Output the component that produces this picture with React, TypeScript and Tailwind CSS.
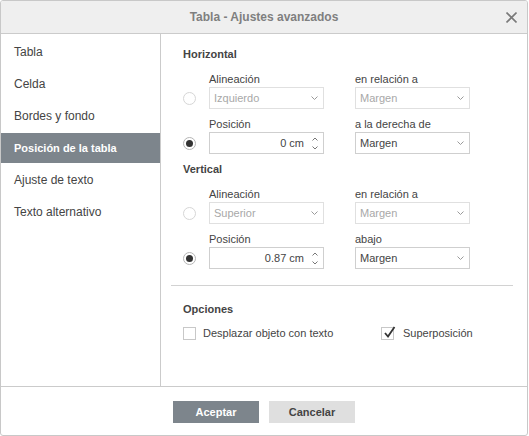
import React from "react";

function Chevron() {
  return (
    <svg width="7" height="4" viewBox="0 0 7 4" className="shrink-0">
      <path d="M0.5 0.5 L3.5 3.5 L6.5 0.5" stroke="#9a9a9a" strokeWidth="1" fill="none" />
    </svg>
  );
}

function Select({ value, disabled }: { value: string; disabled?: boolean }) {
  return (
    <div
      className={`w-[115px] h-[22px] border flex items-center justify-between pl-[4px] pr-[5px] ${
        disabled ? "border-[#e0e0e0] text-[#a8a8a8]" : "border-[#cfcfcf] text-[#444]"
      }`}
    >
      <span>{value}</span>
      <Chevron />
    </div>
  );
}

function Spinner({ value }: { value: string }) {
  return (
    <div className="w-[115px] h-[22px] border border-[#cfcfcf] flex items-center text-[#444]">
      <span className="flex-1 text-right pr-[8px]">{value}</span>
      <div className="flex flex-col justify-between h-full pt-[4px] pb-[3px] pr-[5px]">
        <svg width="6" height="4" viewBox="0 0 6 4">
          <path d="M0.5 3.5 L3 1 L5.5 3.5" stroke="#777" strokeWidth="1" fill="none" />
        </svg>
        <svg width="6" height="4" viewBox="0 0 6 4">
          <path d="M0.5 0.5 L3 3 L5.5 0.5" stroke="#777" strokeWidth="1" fill="none" />
        </svg>
      </div>
    </div>
  );
}

function Radio({ checked }: { checked?: boolean }) {
  return (
    <div
      className={`w-[13px] h-[13px] rounded-full border flex items-center justify-center ${
        checked ? "border-[#b5b5b5]" : "border-[#d6d6d6]"
      }`}
    >
      {checked && <div className="w-[7px] h-[7px] rounded-full bg-[#333]" />}
    </div>
  );
}

function Row({
  leftLabel,
  rightLabel,
  checked,
  left,
  right,
}: {
  leftLabel: string;
  rightLabel: string;
  checked?: boolean;
  left: React.ReactNode;
  right: React.ReactNode;
}) {
  return (
    <div className="flex flex-col">
      <div className="flex h-[16px] leading-[16px]">
        <div className="w-[26px]" />
        <div className="w-[115px]">{leftLabel}</div>
        <div className="w-[115px] ml-[31px]">{rightLabel}</div>
      </div>
      <div className="flex h-[22px] items-center">
        <div className="w-[26px]">
          <Radio checked={checked} />
        </div>
        {left}
        <div className="ml-[31px]">{right}</div>
      </div>
    </div>
  );
}

function Checkbox({ checked }: { checked?: boolean }) {
  return (
    <div className="relative w-[13px] h-[13px] border border-[#c8c8c8] shrink-0">
      {checked && (
        <svg
          width="14"
          height="14"
          viewBox="0 0 14 14"
          className="absolute left-[1px] top-[-3px]"
        >
          <path d="M2 8 L5 11.5 L11.5 2" stroke="#333" strokeWidth="1.8" fill="none" />
        </svg>
      )}
    </div>
  );
}

const navItems = [
  "Tabla",
  "Celda",
  "Bordes y fondo",
  "Posición de la tabla",
  "Ajuste de texto",
  "Texto alternativo",
];

export default function App() {
  return (
    <div className="w-[528px] h-[436px] border border-[#c8c8c8] rounded-[3px] flex flex-col bg-white text-[12px] text-[#444] font-['Liberation_Sans',Arial,sans-serif] overflow-hidden">
      <div className="h-[33px] shrink-0 border-b border-[#cbcbcb] bg-[#efefef] relative flex items-center justify-center">
        <span className="font-bold text-[#7f7f7f] text-[12px]">Tabla - Ajustes avanzados</span>
        <svg
          width="11"
          height="11"
          viewBox="0 0 11 11"
          className="absolute right-[10px] top-[11px]"
        >
          <path d="M0.5 0.5 L10.5 10.5 M10.5 0.5 L0.5 10.5" stroke="#7a7a7a" strokeWidth="1.6" />
        </svg>
      </div>

      <div className="h-[352px] shrink-0 flex">
        <div className="w-[160px] shrink-0 border-r border-[#cbcbcb] pt-[3px] flex flex-col gap-[2px]">
          {navItems.map((item) => (
            <div
              key={item}
              className={`h-[30px] flex items-center pl-[13px] ${
                item === "Posición de la tabla" ? "bg-[#7d858c] text-white font-bold text-[11px]" : ""
              }`}
            >
              {item}
            </div>
          ))}
        </div>

        <div className="flex-1 pl-[22px] pt-[12px] flex flex-col text-[11px]">
          <div className="h-[16px] leading-[16px] font-bold">Horizontal</div>
          <div className="mt-[9px]">
            <Row
              leftLabel="Alineación"
              rightLabel="en relación a"
              left={<Select value="Izquierdo" disabled />}
              right={<Select value="Margen" disabled />}
            />
          </div>
          <div className="mt-[7px]">
            <Row
              leftLabel="Posición"
              rightLabel="a la derecha de"
              checked
              left={<Spinner value="0 cm" />}
              right={<Select value="Margen" />}
            />
          </div>

          <div className="mt-[7px] h-[16px] leading-[16px] font-bold">Vertical</div>
          <div className="mt-[9px]">
            <Row
              leftLabel="Alineación"
              rightLabel="en relación a"
              left={<Select value="Superior" disabled />}
              right={<Select value="Margen" disabled />}
            />
          </div>
          <div className="mt-[7px]">
            <Row
              leftLabel="Posición"
              rightLabel="abajo"
              checked
              left={<Spinner value="0.87 cm" />}
              right={<Select value="Margen" />}
            />
          </div>

          <div className="mt-[16px] ml-[-12px] w-[342px] h-px bg-[#d2d2d2]" />

          <div className="mt-[15px] h-[16px] leading-[16px] font-bold">Opciones</div>
          <div className="mt-[8px] h-[16px] flex items-center">
            <div className="w-[198px] flex items-center">
              <Checkbox />
              <span className="ml-[7px]">Desplazar objeto con texto</span>
            </div>
            <div className="flex items-center">
              <Checkbox checked />
              <span className="ml-[9px]">Superposición</span>
            </div>
          </div>
        </div>
      </div>

      <div className="flex-1 border-t border-[#cbcbcb] pt-[14px] flex justify-center gap-[10px]">
        <button className="w-[86px] h-[22px] bg-[#7d858c] text-white font-bold text-[11px]">Aceptar</button>
        <button className="w-[86px] h-[22px] bg-[#dfdfdf] text-[#444] font-bold text-[11px]">Cancelar</button>
      </div>
    </div>
  );
}
